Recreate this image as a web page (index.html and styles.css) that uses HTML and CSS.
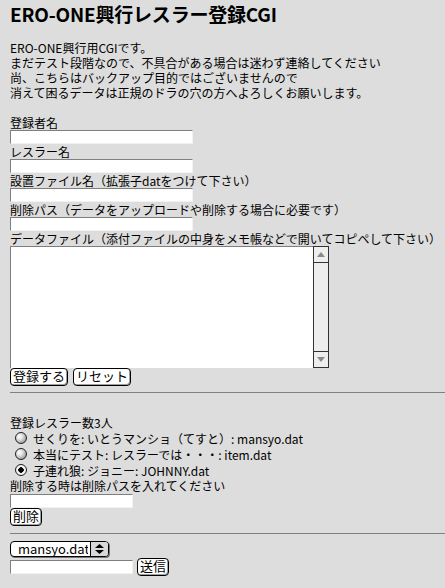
FILE: index.html
```html
<!DOCTYPE html>
<html lang="ja">
<head>
    <meta charset="UTF-8">
    <title>ERO-ONE興行レスラー登録CGI</title>
    <link rel="stylesheet" href="styles.css">
</head>
<body>
    <h1>ERO-ONE興行レスラー登録CGI</h1>
    <div class="intro">
        <div class="line">ERO-ONE興行用CGIです。</div>
        <div class="line">まだテスト段階なので、不具合がある場合は迷わず連絡してください</div>
        <div class="line">尚、こちらはバックアップ目的ではございませんので</div>
        <div class="line">消えて困るデータは正規のドラの穴の方へよろしくお願いします。</div>
    </div>

    <form class="entry">
        <div class="label">登録者名</div>
        <input type="text" class="field">
        <div class="label">レスラー名</div>
        <input type="text" class="field">
        <div class="label">設置ファイル名（拡張子datをつけて下さい）</div>
        <input type="text" class="field">
        <div class="label">削除パス（データをアップロードや削除する場合に必要です）</div>
        <input type="password" class="field">
        <div class="label">データファイル（添付ファイルの中身をメモ帳などで開いてコピペして下さい）</div>
        <div class="textbox">
            <textarea></textarea>
            <div class="scrollbar">
                <div class="arrow">
                    <svg width="8" height="5" viewBox="0 0 8 5"><path d="M0 5 L4 0 L8 5 Z" fill="#8a8a8a"/></svg>
                </div>
                <div class="track"></div>
                <div class="arrow">
                    <svg width="8" height="5" viewBox="0 0 8 5"><path d="M0 0 L8 0 L4 5 Z" fill="#8a8a8a"/></svg>
                </div>
            </div>
        </div>
        <div class="buttons">
            <button type="button">登録する</button>
            <button type="reset">リセット</button>
        </div>
    </form>

    <hr>

    <form class="list">
        <div class="label">登録レスラー数3人</div>
        <label class="row"><input type="radio" name="wrestler">せくりを: いとうマンショ（てすと）: mansyo.dat</label>
        <label class="row"><input type="radio" name="wrestler">本当にテスト: レスラーでは・・・: item.dat</label>
        <label class="row"><input type="radio" name="wrestler" checked>子連れ狼: ジョニー: JOHNNY.dat</label>
        <div class="label">削除する時は削除パスを入れてください</div>
        <input type="password" class="field short">
        <div class="buttons">
            <button type="button">削除</button>
        </div>
    </form>

    <hr class="second">

    <form class="view">
        <span class="select">
            <select>
                <option>mansyo.dat</option>
                <option>item.dat</option>
                <option>JOHNNY.dat</option>
            </select>
            <span class="select-arrows">
                <svg width="9" height="10" viewBox="0 0 9 10"><path d="M0 4 L4.5 0 L9 4 Z M0 6 L9 6 L4.5 10 Z" fill="#000"/></svg>
            </span>
        </span>
        <div class="send">
            <input type="password" class="field short">
            <button type="button">送信</button>
        </div>
    </form>
</body>
</html>
```

FILE: styles.css
```css
body {
    margin: 0;
    padding: 2px 0 0 10px;
    background-color: #dddddd;
    color: #000;
    font-family: "Noto Sans CJK JP", "Noto Sans", sans-serif;
    font-size: 12px;
    line-height: 15px;
}
h1 {
    margin: 0 0 14px;
    font-size: 19px;
    line-height: 24px;
    font-weight: bold;
    letter-spacing: -0.2px;
}
.intro {
    margin: 0 0 15px;
}
.line,
.label {
    height: 15px;
    line-height: 15px;
    white-space: nowrap;
}
.field {
    display: block;
    box-sizing: border-box;
    width: 183px;
    height: 14px;
    margin: 0;
    padding: 0 2px;
    border: 1px solid;
    border-color: #7f7f7f #f2f2f2 #f2f2f2 #7f7f7f;
    background-color: #fff;
    font: inherit;
    outline: none;
}
.field.short {
    width: 123px;
}
.textbox {
    display: flex;
    width: 319px;
    height: 122px;
}
.textbox textarea {
    flex: 1;
    margin: 0;
    padding: 1px 2px;
    border: none;
    border-top: 1px solid #7f7f7f;
    border-left: 1px solid #7f7f7f;
    background-color: #fff;
    font: inherit;
    resize: none;
    outline: none;
    overflow: hidden;
}
.scrollbar {
    display: flex;
    flex-direction: column;
    width: 16px;
    box-sizing: border-box;
    border: 1px solid #333;
    background-color: #eeeeee;
}
.arrow {
    display: flex;
    align-items: center;
    justify-content: center;
    height: 15px;
}
.arrow:first-child {
    border-bottom: 1px solid #333;
}
.arrow:last-child {
    border-top: 1px solid #333;
}
.track {
    flex: 1;
}
.buttons {
    display: flex;
    gap: 5px;
}
button {
    box-sizing: border-box;
    height: 18px;
    margin: 0;
    padding: 0 2px 3px;
    border: 1px solid #000;
    border-radius: 4px;
    background-color: #fff;
    box-shadow: inset -1px -1px 0 #a0a0a0;
    color: #000;
    font-family: "Noto Sans CJK JP", sans-serif;
    font-size: 13px;
    line-height: 13px;
    cursor: pointer;
}
hr {
    height: 0;
    margin: 6px 0 0 0;
    border: none;
    border-top: 1px solid #808080;
}
hr.second {
    margin-top: 7px;
}
.list {
    margin-top: 22px;
}
.row {
    display: flex;
    align-items: center;
    gap: 6px;
    height: 16px;
    padding-left: 5px;
    white-space: nowrap;
}
.row input {
    appearance: none;
    box-sizing: border-box;
    width: 12px;
    height: 12px;
    margin: 0;
    border: 1px solid #222;
    border-radius: 50%;
    background: radial-gradient(circle at 35% 35%, #ffffff 0, #e6e6e6 30%, #9a9a9a 80%, #6a6a6a 100%);
}
.row input:checked {
    background: radial-gradient(circle, #000 0, #000 2.5px, #ffffff 3px, #d0d0d0 100%);
}
.list .field {
    margin-top: 1px;
}
.view {
    padding-top: 7px;
}
.select {
    position: relative;
    display: inline-block;
    height: 16px;
}
.select select {
    appearance: none;
    box-sizing: border-box;
    width: 99px;
    height: 16px;
    margin: 0;
    padding: 0 20px 0 7px;
    border: 1px solid #000;
    border-radius: 4px;
    background-color: #fff;
    box-shadow: 1px 1px 0 #777;
    color: #000;
    font-family: "Noto Sans CJK JP", sans-serif;
    font-size: 13px;
    line-height: 14px;
    outline: none;
}
.select-arrows {
    position: absolute;
    top: 1px;
    right: 1px;
    display: flex;
    align-items: center;
    justify-content: center;
    width: 17px;
    height: 14px;
    border-left: 1px solid #000;
    border-radius: 0 3px 3px 0;
    background-color: #d8d8d8;
    pointer-events: none;
}
.send {
    display: flex;
    align-items: center;
    gap: 4px;
    margin-top: 1px;
}
```
